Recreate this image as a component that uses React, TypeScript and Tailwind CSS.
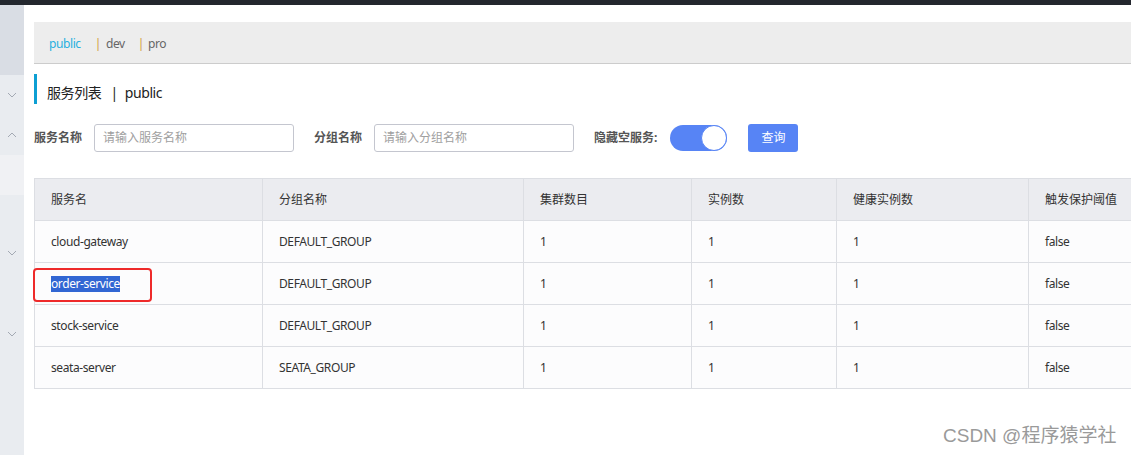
import React from "react";

const font = { fontFamily: '"Noto Sans", "Noto Sans CJK SC", sans-serif' };

function Chevron({ up = false }: { up?: boolean }) {
  return (
    <svg width="10" height="6" viewBox="0 0 10 6" className="block">
      <polyline
        points={up ? "1,5 5,1 9,5" : "1,1 5,5 9,1"}
        fill="none"
        stroke="#a3a9b3"
        strokeWidth="1"
      />
    </svg>
  );
}

const rows = [
  ["cloud-gateway", "DEFAULT_GROUP"],
  ["order-service", "DEFAULT_GROUP"],
  ["stock-service", "DEFAULT_GROUP"],
  ["seata-server", "SEATA_GROUP"],
];

const widths = ["w-[228px]", "w-[261px]", "w-[168px]", "w-[145px]", "w-[192px]", "w-[200px]"];

export default function App() {
  return (
    <div
      className="w-[1131px] h-[455px] overflow-hidden relative bg-white text-[#333] tracking-[-0.4px]"
      style={font}
    >
      <div className="h-[5px] bg-[#23272e]" />
      <div className="flex h-[450px]">
        {/* sidebar */}
        <div className="w-[24px] shrink-0 flex flex-col bg-[#e9ecf0]">
          <div className="h-[70px] bg-[#d9dde4]" />
          <div className="h-[40px] flex items-center justify-center">
            <Chevron />
          </div>
          <div className="h-[40px] flex items-center justify-center">
            <Chevron up />
          </div>
          <div className="h-[40px] bg-[#f0f1f4]" />
          <div className="h-[38px]" />
          <div className="h-[40px] flex items-center justify-center">
            <Chevron />
          </div>
          <div className="h-[41px]" />
          <div className="h-[40px] flex items-center justify-center">
            <Chevron />
          </div>
        </div>

        {/* main */}
        <div className="flex-1 pl-[10px] pt-[17px] min-w-0">
          <div className="h-[42px] bg-[#ededed] border-b border-[#cccccc] flex items-center pl-[15px] pt-[2px] text-[12px]">
            <span className="text-[#28b0df]">public</span>
            <span className="ml-[14px] text-[#d39b3e]">|</span>
            <span className="ml-[5px] text-[#666]">dev</span>
            <span className="ml-[13px] text-[#d39b3e]">|</span>
            <span className="ml-[4px] text-[#666]">pro</span>
          </div>

          <div className="mt-[10px] h-[30px] border-l-[3px] border-[#0d9fd3] flex items-center pl-[10px] pt-[6px] text-[14px] text-[#222]">
            <span>服务列表</span>
            <span className="ml-[9px]">|</span>
            <span className="ml-[7px]">public</span>
          </div>

          <div className="mt-[20px] h-[28px] flex items-center text-[12px] tracking-normal">
            <span className="font-bold text-[#555]">服务名称</span>
            <div className="ml-[12px] w-[200px] h-[28px] border border-[#c4c6cf] rounded-[3px] flex items-center pl-[8px] text-[#a0a0a0]">
              请输入服务名称
            </div>
            <span className="ml-[20px] font-bold text-[#555]">分组名称</span>
            <div className="ml-[12px] w-[200px] h-[28px] border border-[#c4c6cf] rounded-[3px] flex items-center pl-[8px] text-[#a0a0a0]">
              请输入分组名称
            </div>
            <span className="ml-[20px] font-bold text-[#555]">隐藏空服务:</span>
            <div className="ml-[13px] w-[57px] h-[26px] rounded-full bg-[#5784f5] relative">
              <div className="absolute right-0 top-0 w-[26px] h-[26px] rounded-full bg-white border border-[#5784f5]" />
            </div>
            <div className="ml-[21px] w-[50px] h-[28px] rounded-[3px] bg-[#5784f5] text-white flex items-center justify-center">
              查询
            </div>
          </div>

          <div className="mt-[26px] w-[1300px] border-t border-l border-[#dcdee3] text-[12px]">
            <div className="flex h-[42px] bg-[#ebecf0] border-b border-[#dcdee3] tracking-normal">
              {["服务名", "分组名称", "集群数目", "实例数", "健康实例数", "触发保护阈值"].map((h, i) => (
                <div
                  key={h}
                  className={`${widths[i]} shrink-0 border-r border-[#dcdee3] flex items-center pl-[16px]`}
                >
                  {h}
                </div>
              ))}
            </div>
            {rows.map((r, ri) => (
              <div key={r[0]} className="flex h-[42px] bg-[#fcfcfd] border-b border-[#dcdee3]">
                <div className={`${widths[0]} shrink-0 border-r border-[#dcdee3] flex items-center pl-[16px] relative`}>
                  {ri === 1 ? (
                    <>
                      <span className="bg-[#3166d3] text-white leading-[16px]">{r[0]}</span>
                      <div className="absolute left-[-2px] top-[5px] w-[119px] h-[34px] border-2 border-[#ee2a2a] rounded-[4px]" />
                    </>
                  ) : (
                    r[0]
                  )}
                </div>
                <div className={`${widths[1]} shrink-0 border-r border-[#dcdee3] flex items-center pl-[16px]`}>{r[1]}</div>
                <div className={`${widths[2]} shrink-0 border-r border-[#dcdee3] flex items-center pl-[16px]`}>1</div>
                <div className={`${widths[3]} shrink-0 border-r border-[#dcdee3] flex items-center pl-[16px]`}>1</div>
                <div className={`${widths[4]} shrink-0 border-r border-[#dcdee3] flex items-center pl-[16px]`}>1</div>
                <div className={`${widths[5]} shrink-0 border-r border-[#dcdee3] flex items-center pl-[16px]`}>false</div>
              </div>
            ))}
          </div>
        </div>
      </div>

      <div
        className="absolute left-[943px] top-[424px] text-[19px] text-[#9a9a9a] leading-[24px] tracking-normal"
        style={{ fontFamily: '"Liberation Sans", "Noto Sans CJK SC", sans-serif', textShadow: "0 0 1px #fff" }}
      >
        CSDN @程序猿学社
      </div>
    </div>
  );
}
